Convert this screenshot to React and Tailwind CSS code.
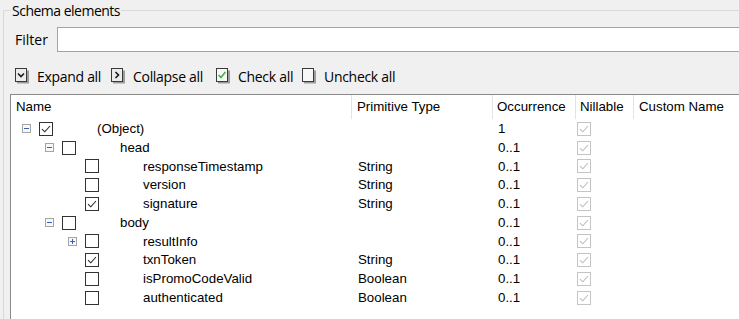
import React from 'react';

const rows = [
  { level: 0, toggle: 'minus', checked: true, name: '(Object)', type: '', occ: '1' },
  { level: 1, toggle: 'minus', checked: false, name: 'head', type: '', occ: '0..1' },
  { level: 2, toggle: null, checked: false, name: 'responseTimestamp', type: 'String', occ: '0..1' },
  { level: 2, toggle: null, checked: false, name: 'version', type: 'String', occ: '0..1' },
  { level: 2, toggle: null, checked: true, name: 'signature', type: 'String', occ: '0..1' },
  { level: 1, toggle: 'minus', checked: false, name: 'body', type: '', occ: '0..1' },
  { level: 2, toggle: 'plus', checked: false, name: 'resultInfo', type: '', occ: '0..1' },
  { level: 2, toggle: null, checked: true, name: 'txnToken', type: 'String', occ: '0..1' },
  { level: 2, toggle: null, checked: false, name: 'isPromoCodeValid', type: 'Boolean', occ: '0..1' },
  { level: 2, toggle: null, checked: false, name: 'authenticated', type: 'Boolean', occ: '0..1' },
];

const indent = ['pl-0', 'pl-[23px]', 'pl-[46px]'];

const cols = 'grid grid-cols-[340px_141px_83px_58px_1fr]';

const ToolIcon = ({ kind }) => (
  <svg width="14" height="16" viewBox="0 0 14 16" className="shrink-0">
    <rect x="2" y="2.5" width="12" height="13" fill="#9c9c9c" />
    <rect x="0.5" y="0.5" width="11" height="13" fill={kind === 'check' || kind === 'uncheck' ? '#f7f7f7' : '#ececec'} stroke="#3a3a3a" />
    {kind === 'expand' && <polyline points="3,5.5 6,8.5 9,5.5" fill="none" stroke="#1a1a1a" strokeWidth="1.6" />}
    {kind === 'collapse' && <polyline points="4.5,4 7.5,7 4.5,10" fill="none" stroke="#1a1a1a" strokeWidth="1.6" />}
    {kind === 'check' && <polyline points="2.6,7 5,9.6 9.4,4" fill="none" stroke="#3db83d" strokeWidth="1.6" />}
  </svg>
);

const Toggle = ({ kind }) => (
  <svg width="9" height="9" viewBox="0 0 9 9" className="shrink-0">
    <rect x="0.5" y="0.5" width="8" height="8" fill="#f8f8f8" stroke="#a4a4a4" />
    <line x1="2" y1="4.5" x2="7" y2="4.5" stroke="#2f64b8" strokeWidth="1" />
    {kind === 'plus' && <line x1="4.5" y1="2" x2="4.5" y2="7" stroke="#2f64b8" strokeWidth="1" />}
  </svg>
);

const Check = ({ checked, muted }) => (
  <svg width="14" height="14" viewBox="0 0 14 14" className="shrink-0">
    <rect x="0.5" y="0.5" width="13" height="13" fill="#ffffff" stroke={muted ? '#c4c4c4' : '#333333'} />
    {checked && (
      <polyline points="3,7.2 5.8,9.8 11,4" fill="none" stroke={muted ? '#bdbdbd' : '#2a2a2a'} strokeWidth="1.1" />
    )}
  </svg>
);

const tools = [
  { kind: 'expand', label: 'Expand all', w: 'w-[96px]' },
  { kind: 'collapse', label: 'Collapse all', w: 'w-[105px]' },
  { kind: 'check', label: 'Check all', w: 'w-[86px]' },
  { kind: 'uncheck', label: 'Uncheck all', w: 'w-[100px]' },
];

export default function App() {
  return (
    <div className="w-[739px] h-[319px] overflow-hidden bg-[#f0f0f0] pt-[1px] pl-[3px] font-['Open_Sans',sans-serif] text-black">
      <fieldset className="w-[800px] h-[340px] border-t border-l border-[#d9d9d9] pl-0">
        <legend className="ml-[7px] px-[1px] text-[14px] leading-[19px] tracking-[-0.5px]">Schema elements</legend>

        {/* filter */}
        <div className="flex items-center mt-[7px]">
          <span className="w-[53px] pl-[11px] text-[14px]">Filter</span>
          <div className="flex-1 h-[25px] bg-white border border-[#a3a3a3]" />
        </div>

        {/* toolbar */}
        <div className="flex items-center h-[20px] mt-[14px] pl-[11px] text-[14px]">
          {tools.map((t) => (
            <div key={t.kind} className={`flex items-center gap-[8px] ${t.w}`}>
              <ToolIcon kind={t.kind} />
              <span className="tracking-[-0.3px]">{t.label}</span>
            </div>
          ))}
        </div>

        {/* tree table */}
        <div className="ml-[6px] mt-[8px] h-[260px] bg-white border-l border-t border-[#8a8a8a] font-['Liberation_Sans',Arial,sans-serif] text-[13.3px]">
          <div className={`${cols} h-[24px] items-stretch`}>
            <div className="flex items-center pl-[5px]">Name</div>
            <div className="flex items-center pl-[5px] border-l border-[#e3e3e3]">Primitive Type</div>
            <div className="flex items-center pl-[4px] border-l border-[#e3e3e3]">Occurrence</div>
            <div className="flex items-center pl-[4px] border-l border-[#e3e3e3]">Nillable</div>
            <div className="flex items-center pl-[5px] border-l border-[#e3e3e3]">Custom Name</div>
          </div>

          {rows.map((r) => (
            <div key={r.name} className={`${cols} h-[18.75px] items-center`}>
              <div className={`flex items-center ${indent[r.level]}`}>
                <div className="ml-[11px] w-[9px] flex items-center">
                  {r.toggle && <Toggle kind={r.toggle} />}
                </div>
                <div className="ml-[8px]">
                  <Check checked={r.checked} />
                </div>
                <span className="ml-[44px] whitespace-nowrap">{r.name}</span>
              </div>
              <div className="pl-[6px] border-l border-transparent">{r.type}</div>
              <div className="pl-[5px] border-l border-transparent">{r.occ}</div>
              <div className="pl-[1px] border-l border-transparent flex items-center">
                <Check checked muted />
              </div>
              <div />
            </div>
          ))}
        </div>
      </fieldset>
    </div>
  );
}
